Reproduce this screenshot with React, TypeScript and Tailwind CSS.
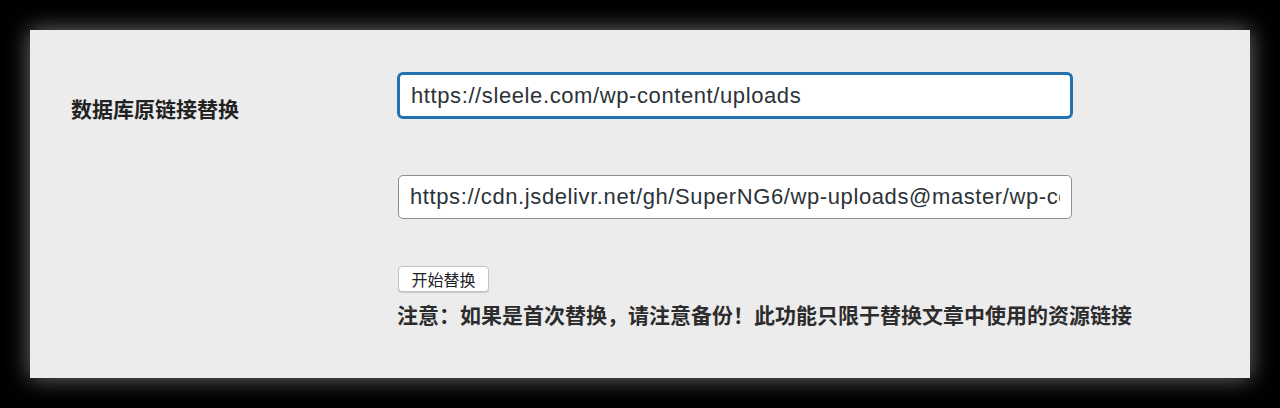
const sans = "font-['Liberation_Sans','Noto_Sans_CJK_SC',sans-serif]";
const cjk = "font-['Noto_Sans_CJK_SC','Noto_Sans',sans-serif]";

export default function App() {
  return (
    <div className="h-[408px] w-[1280px] bg-black pt-[30px] pl-[30px]">
      <div className="flex h-[348px] w-[1220px] bg-[#ececec] pl-[41px] pt-[42px] shadow-[0_0_22px_rgba(255,255,255,0.45)]">
        <div className={`${cjk} w-[326px] pt-[23px] text-[21px] font-bold leading-[26px] text-[#222]`}>
          数据库原链接替换
        </div>
        <div className="flex flex-col">
          <input
            readOnly
            value="https://sleele.com/wp-content/uploads"
            className={`${sans} h-[47px] w-[676px] rounded-[6px] border-[3px] border-[#2271b1] bg-white px-[11px] text-[22px] tracking-[0.6px] text-[#2c3338] outline-none`}
          />
          <input
            readOnly
            value="https://cdn.jsdelivr.net/gh/SuperNG6/wp-uploads@master/wp-content/uploads"
            className={`${sans} mt-[56px] ml-[1px] h-[44px] w-[674px] rounded-[5px] border-[1.5px] border-[#8c8f94] bg-white px-[11px] text-[22px] tracking-[0.6px] text-[#2c3338] outline-none`}
          />
          <div className="mt-[47px] ml-[1px]">
            <button
              className={`${cjk} h-[26px] w-[91px] rounded-[4px] border border-[#c3c4c7] bg-white text-[16px] leading-none text-[#1d2327] shadow-[0_1px_1px_rgba(0,0,0,0.15)]`}
            >
              开始替换
            </button>
          </div>
          <p className={`${cjk} mt-[9px] text-[21px] font-bold leading-[26px] text-[#2c2c2c]`}>
            注意：如果是首次替换，请注意备份！此功能只限于替换文章中使用的资源链接
          </p>
        </div>
      </div>
    </div>
  );
}
